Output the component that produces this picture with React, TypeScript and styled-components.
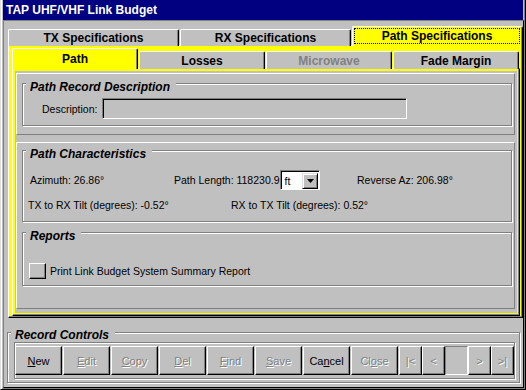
import React from "react";
import styled, { createGlobalStyle } from "styled-components";

const FONT = `"Liberation Sans", Arial, sans-serif`;
const GRAY = "#c0c0c0";
const DARK = "#808080";
const YELLOW = "#ffff00";

const GlobalStyle = createGlobalStyle`
  html, body { margin: 0; padding: 0; background: ${GRAY}; }
  *, *::before, *::after { box-sizing: border-box; }
`;

const Window = styled.div`
  width: 526px;
  height: 390px;
  background: ${GRAY};
  display: flex;
  flex-direction: column;
  border-left: 1px solid #dfdfdf;
  border-right: 1px solid #000;
  border-bottom: 1px solid #000;
  box-shadow: inset 1px 0 0 #fff, inset -1px -1px 0 ${DARK};
  padding: 0 1px 1px 2px;
  font-family: ${FONT};
  font-size: 10.5px;
  color: #000;
  overflow: hidden;
`;

const TitleBar = styled.div`
  flex: none;
  height: 20px;
  line-height: 20px;
  padding-left: 3px;
  margin-right: 1px;
  background: #000080;
  color: #fff;
  font-weight: bold;
  font-size: 12px;
  white-space: nowrap;
`;

const Client = styled.div`
  flex: 1;
  display: flex;
  flex-direction: column;
  padding: 5px 0 0 4px;
  border: 1px solid;
  border-color: ${DARK} #000 #000 ${DARK};
`;

const TabStrip = styled.div<{ $h: number }>`
  flex: none;
  display: flex;
  align-items: flex-end;
  gap: 1px;
  height: ${(p) => p.$h}px;
  margin-bottom: -1px;
  position: relative;
  z-index: 1;
`;

const Tab = styled.div<{ $w: number; $active?: boolean; $disabled?: boolean }>`
  flex: none;
  width: ${(p) => p.$w}px;
  height: ${(p) => (p.$active ? "100%" : "calc(100% - 3px)")};
  display: flex;
  align-items: center;
  justify-content: center;
  background: ${(p) => (p.$active ? YELLOW : GRAY)};
  color: ${(p) => (p.$disabled ? DARK : "#000")};
  font-weight: bold;
  font-size: 12px;
  white-space: nowrap;
  border-top: 1px solid #fff;
  border-left: 1px solid #fff;
  border-right: 1px solid #000;
  border-radius: 2px 2px 0 0;
  box-shadow: inset -1px 0 0 ${DARK};
  padding-bottom: ${(p) => (p.$active ? 1 : 0)}px;
`;

const Focus = styled.span`
  flex: 1;
  align-self: stretch;
  margin: 1px 2px 1px 1px;
  border: 1px dotted #000;
  display: flex;
  align-items: center;
  justify-content: center;
`;

const TabBody = styled.div<{ $outer?: boolean }>`
  display: flex;
  flex-direction: column;
  flex: ${(p) => (p.$outer ? "none" : "1")};
  height: ${(p) => (p.$outer ? "273px" : "auto")};
  background: ${YELLOW};
  border-top: 1px solid #fff;
  border-left: 1px solid #fff;
  border-right: 1px solid #000;
  border-bottom: 1px solid #000;
  box-shadow: inset -1px -1px 0 ${DARK};
  padding: ${(p) => (p.$outer ? "2px 2px 1px 3px" : "2px")};
`;

const Sheet = styled.div`
  flex: 1;
  display: flex;
  flex-direction: column;
  gap: 7px;
  background: ${GRAY};
  padding: 2px 2px 4px 1px;
`;

const Panel = styled.div<{ $pt: number; $pb: number; $grow?: boolean }>`
  flex: ${(p) => (p.$grow ? "1" : "none")};
  display: flex;
  flex-direction: column;
  border-top: 1px solid #fff;
  border-left: 1px solid #fff;
  border-right: 1px solid ${DARK};
  border-bottom: 1px solid ${DARK};
  padding: ${(p) => `${p.$pt}px 2px ${p.$pb}px 5px`};
`;

const Group = styled.div<{ $h: number; $mt?: number }>`
  flex: none;
  display: flex;
  flex-direction: column;
  height: ${(p) => p.$h}px;
  margin-top: ${(p) => p.$mt ?? 0}px;
  border: 1px solid ${DARK};
  box-shadow: inset 1px 1px 0 #fff, 1px 1px 0 #fff;
`;

const GroupTitle = styled.div<{ $mt?: number }>`
  flex: none;
  align-self: flex-start;
  margin: ${(p) => p.$mt ?? -4}px 0 0 3px;
  padding: 0 6px 0 4px;
  height: 14px;
  line-height: 14px;
  background: ${GRAY};
  font-weight: bold;
  font-style: italic;
  font-size: 12px;
  white-space: nowrap;
`;

const Row = styled.div<{ $mt: number; $pl: number; $h: number }>`
  flex: none;
  display: flex;
  align-items: center;
  height: ${(p) => p.$h}px;
  margin-top: ${(p) => p.$mt}px;
  padding-left: ${(p) => p.$pl}px;
  white-space: nowrap;
`;

const Cell = styled.div<{ $w?: number }>`
  flex: none;
  display: flex;
  align-items: center;
  width: ${(p) => (p.$w ? `${p.$w}px` : "auto")};
`;

const Label = styled.span<{ $gap?: number }>`
  margin-right: ${(p) => p.$gap ?? 0}px;
`;

const TextField = styled.div`
  width: 305px;
  height: 21px;
  background: ${GRAY};
  border: 1px solid;
  border-color: ${DARK} #fff #fff ${DARK};
  box-shadow: inset 1px 1px 0 #000;
`;

const Combo = styled.div`
  width: 40px;
  height: 20px;
  display: flex;
  align-items: center;
  background: #fff;
  border: 1px solid;
  border-color: ${DARK} #fff #fff ${DARK};
  box-shadow: inset 1px 1px 0 #000;
  padding: 2px 1px 1px 3px;
`;

const ComboText = styled.span`
  flex: 1;
`;

const ComboButton = styled.div`
  width: 16px;
  height: 16px;
  display: flex;
  align-items: center;
  justify-content: center;
  background: ${GRAY};
  border: 1px solid;
  border-color: #dfdfdf #000 #000 #dfdfdf;
  box-shadow: inset 1px 1px 0 #fff, inset -1px -1px 0 ${DARK};
`;

const CheckButton = styled.div`
  width: 17px;
  height: 16px;
  margin-right: 4px;
  background: ${GRAY};
  border: 1px solid;
  border-color: #fff #000 #000 #fff;
  box-shadow: inset -1px -1px 0 ${DARK};
`;

const RecordGroup = styled(Group)`
  margin: 14px 3px 0 -1px;
`;

const ButtonFrame = styled.div`
  flex: none;
  display: flex;
  height: 37px;
  margin: 0 4px 0 6px;
  padding: 3px 0;
  border: 1px solid ${DARK};
  box-shadow: inset 1px 1px 0 #fff, 1px 1px 0 #fff;
`;

const Btn = styled.div<{ $w: number; $disabled?: boolean; $gap?: number }>`
  flex: none;
  width: ${(p) => p.$w}px;
  height: 29px;
  margin-right: ${(p) => p.$gap ?? 0}px;
  display: flex;
  align-items: center;
  justify-content: center;
  background: ${GRAY};
  border: 1px solid;
  border-color: #fff #000 #000 #fff;
  box-shadow: inset -1px -1px 0 ${DARK};
  color: ${(p) => (p.$disabled ? DARK : "#000")};
  text-shadow: ${(p) => (p.$disabled ? "1px 1px 0 #fff" : "none")};
  font-size: 11px;
  white-space: nowrap;
`;

const NavField = styled.div`
  flex: none;
  width: 23px;
  height: 29px;
  border: 1px solid;
  border-color: ${DARK} #fff #fff ${DARK};
`;

const Arrow = () => (
  <svg width="7" height="4" viewBox="0 0 7 4">
    <polygon points="0,0 7,0 3.5,4" fill="#000" />
  </svg>
);

const buttons: { label: React.ReactNode; disabled?: boolean }[] = [
  { label: <><u>N</u>ew</> },
  { label: <><u>E</u>dit</>, disabled: true },
  { label: <><u>C</u>opy</>, disabled: true },
  { label: <><u>D</u>el</>, disabled: true },
  { label: <><u>F</u>ind</>, disabled: true },
  { label: <><u>S</u>ave</>, disabled: true },
  { label: <>Ca<u>n</u>cel</> },
  { label: <>Cl<u>o</u>se</>, disabled: true },
];

export default function App() {
  return (
    <>
      <GlobalStyle />
      <Window>
        <TitleBar>TAP UHF/VHF Link Budget</TitleBar>
        <Client>
          <TabStrip $h={20}>
            <Tab $w={171}>TX Specifications</Tab>
            <Tab $w={171}>RX Specifications</Tab>
            <Tab $w={171} $active>
              <Focus>Path Specifications</Focus>
            </Tab>
          </TabStrip>
          <TabBody $outer>
            <TabStrip $h={21}>
              <Tab $w={126} $active>Path</Tab>
              <Tab $w={126}>Losses</Tab>
              <Tab $w={126} $disabled>Microwave</Tab>
              <Tab $w={126}>Fade Margin</Tab>
            </TabStrip>
            <TabBody>
              <Sheet>
                <Panel $pt={9} $pb={8}>
                  <Group $h={43}>
                    <GroupTitle>Path Record Description</GroupTitle>
                    <Row $mt={4} $pl={19} $h={21}>
                      <Label $gap={5}>Description:</Label>
                      <TextField />
                    </Row>
                  </Group>
                </Panel>
                <Panel $pt={7} $pb={21} $grow>
                  <Group $h={72}>
                    <GroupTitle>Path Characteristics</GroupTitle>
                    <Row $mt={9} $pl={7} $h={20}>
                      <Cell $w={144}>Azimuth: 26.86°</Cell>
                      <Cell $w={183}>
                        <Label $gap={1}>Path Length: 118230.9</Label>
                        <Combo>
                          <ComboText>ft</ComboText>
                          <ComboButton>
                            <Arrow />
                          </ComboButton>
                        </Combo>
                      </Cell>
                      <Cell>Reverse Az: 206.98°</Cell>
                    </Row>
                    <Row $mt={8} $pl={5} $h={14}>
                      <Cell $w={203}>TX to RX Tilt (degrees): -0.52°</Cell>
                      <Cell>RX to TX Tilt (degrees): 0.52°</Cell>
                    </Row>
                  </Group>
                  <Group $h={54} $mt={10}>
                    <GroupTitle>Reports</GroupTitle>
                    <Row $mt={20} $pl={6} $h={16}>
                      <CheckButton />
                      <Label>Print Link Budget System Summary Report</Label>
                    </Row>
                  </Group>
                </Panel>
              </Sheet>
            </TabBody>
          </TabBody>
          <RecordGroup $h={51}>
            <GroupTitle $mt={-5}>Record Controls</GroupTitle>
            <ButtonFrame>
              {buttons.map((b, i) => (
                <Btn key={i} $w={47} $gap={1} $disabled={b.disabled}>
                  {b.label}
                </Btn>
              ))}
              <Btn $w={23} $disabled>|&lt;</Btn>
              <Btn $w={23} $disabled>&lt;</Btn>
              <NavField />
              <Btn $w={23} $disabled>&gt;</Btn>
              <Btn $w={23} $disabled>&gt;|</Btn>
            </ButtonFrame>
          </RecordGroup>
        </Client>
      </Window>
    </>
  );
}
